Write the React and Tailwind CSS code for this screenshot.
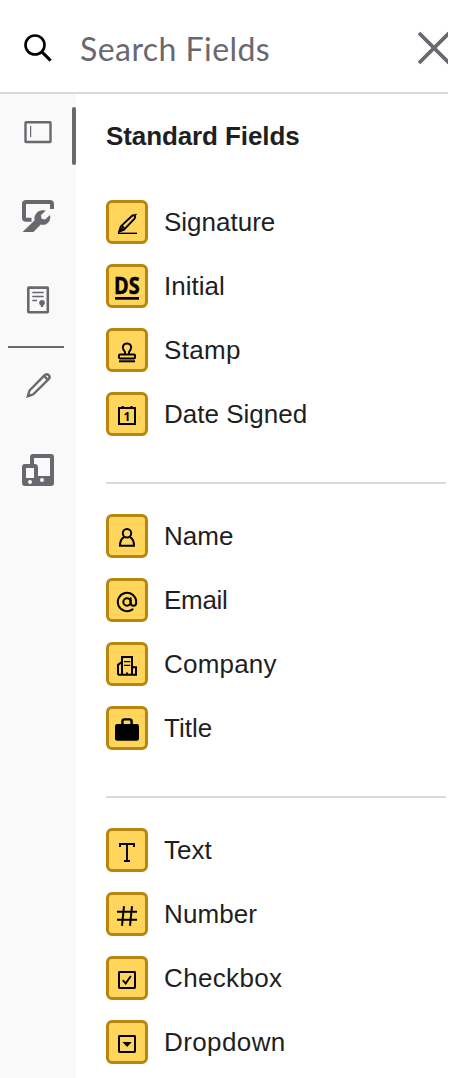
import { AtSign } from "lucide-react";

const SignatureIcon = () => (
  <g strokeWidth="1.9">
    <path d="M13.2 31.6l1.6-5.2L25.6 16.2c1.1-1 2.4-1 3.1-.3.7.8.5 2-.4 3L18 29.6z" />
    <path d="M15.6 25.6l2.8 3M28.2 15.8l2.3-1.8M13 31.6l5-5.2" strokeWidth="1.5" />
    <path d="M12 33.3h19" strokeWidth="1.4" />
  </g>
);

const InitialIcon = () => (
  <g fill="#000" stroke="none">
    <text x="8" y="30" fontFamily="'Open Sans', sans-serif" fontWeight="700" fontSize="23" textLength="25.6" lengthAdjust="spacingAndGlyphs" stroke="#000" strokeWidth=".5">DS</text>
    <path d="M9 33h24v2.7H9z" />
  </g>
);

const StampIcon = () => (
  <g>
    <path d="M19 26v-2l-1.6-2.6c-1.7-3 .4-5.8 3.6-5.8s5.3 2.8 3.6 5.8L23 24v2" />
    <rect x="13" y="26.6" width="16" height="3.8" rx=".8" />
    <path d="M13 33.3h16" />
  </g>
);

const DateIcon = () => (
  <g>
    <path d="M13 16h16v16H13zM16.7 14v2M25.5 14v2" />
    <text x="17.4" y="28.6" fill="#000" stroke="none" fontFamily="'Open Sans', sans-serif" fontWeight="700" fontSize="12">1</text>
  </g>
);

const NameIcon = () => (
  <g>
    <circle cx="21" cy="19.3" r="4.2" />
    <path d="M17.9 23.2c-2.3 1.4-3.9 4.2-3.9 8.6h14c0-4.4-1.6-7.2-3.9-8.6" />
  </g>
);

const EmailIcon = () => (
  <AtSign x="10" y="13" width="22" height="22" strokeWidth={2.2} />
);

const CompanyIcon = () => (
  <g strokeWidth="2">
    <path d="M16 33V15h10v18M12 32.8V22.8l3.8-2.6M26 25.2h4v7.6H12" />
    <path d="M18 19.6h6.3M18 23.3h6.3" strokeWidth="1.2" />
    <path d="M21 33v-2.6" />
  </g>
);

const TitleIcon = () => (
  <g>
    <rect x="9" y="18" width="24" height="16.7" rx="2.2" fill="#000" stroke="none" />
    <path d="M16.4 19v-3.6c0-1.3.8-2 2-2h5.2c1.2 0 2 .7 2 2V19" strokeWidth="2.4" />
  </g>
);

const TextIcon = () => (
  <path d="M14 19v-3h14v3M21 16v17M18 33h6" strokeWidth="1.9" />
);

const NumberIcon = () => (
  <path d="M11 19.7h20M11 27.7h20M18 14.2l-2 19.6M26 14.2l-2 19.6" strokeWidth="2" />
);

const CheckboxIcon = () => (
  <g>
    <rect x="13" y="16" width="16" height="16" rx=".4" />
    <path d="M16.7 24.2l3 3.2 5.2-7.4" strokeWidth="1.9" />
  </g>
);

const DropdownIcon = () => (
  <g>
    <rect x="13" y="16" width="16" height="16" rx=".4" />
    <path d="M16.5 22h9.2l-4.6 5z" fill="#000" stroke="none" />
  </g>
);

const groups = [
  [
    { label: "Signature", icon: SignatureIcon },
    { label: "Initial", icon: InitialIcon },
    { label: "Stamp", icon: StampIcon, tracking: "tracking-[0.3px]" },
    { label: "Date Signed", icon: DateIcon },
  ],
  [
    { label: "Name", icon: NameIcon },
    { label: "Email", icon: EmailIcon, tracking: "tracking-[-0.3px]" },
    { label: "Company", icon: CompanyIcon, tracking: "tracking-[0.2px]" },
    { label: "Title", icon: TitleIcon },
  ],
  [
    { label: "Text", icon: TextIcon },
    { label: "Number", icon: NumberIcon, tracking: "tracking-[0.1px]" },
    { label: "Checkbox", icon: CheckboxIcon, tracking: "tracking-[0.35px]" },
    { label: "Dropdown", icon: DropdownIcon, tracking: "tracking-[0.4px]" },
  ],
];

const RailButton = ({ label, children }) => (
  <button aria-label={label} className="h-10 w-10 shrink-0">
    <svg viewBox="0 0 40 40" className="block h-10 w-10" fill="none" stroke="#69686f" strokeWidth="2.4">
      {children}
    </svg>
  </button>
);

const Rail = () => (
  <nav className="relative flex w-[76px] shrink-0 flex-col items-center bg-[#f9f9f9] pt-[18px]">
    <span className="absolute right-0 top-[13px] h-[58px] w-1 rounded-sm bg-[#69686f]" />

    <div className="flex flex-col gap-11">
      <RailButton label="Standard fields">
        <rect x="7.5" y="10.2" width="25" height="19.8" rx=".6" />
        <path d="M12.6 14v11" strokeWidth="1.2" />
      </RailButton>

      <RailButton label="Custom fields">
        <path d="M13.5 23.7H8c-1.4 0-2-.7-2-2V8c0-1.3.7-2 2-2h24c1.3 0 2 .7 2 2v5" strokeWidth="4" />
        <path
          d="M4.6 36h10.8l7.4-7.4c3.2.7 6.1-.3 7.7-2.4 1.8-2.3 2.2-5 1.5-7.2l-4.9 4.6-3.5-.8-.7-3.5 4.7-4.6c-3.3-1.1-6.8-.2-9 2.2-2 2.3-2.6 5-2 7.4z"
          fill="#69686f"
          stroke="none"
        />
      </RailButton>

      <RailButton label="Pre-fill fields">
        <rect x="10.3" y="7.6" width="19.5" height="24.6" rx=".5" strokeWidth="2.6" />
        <path d="M14.3 12.5h11.4M14.3 16.5h11.4M14.3 20.5H19" strokeWidth="1.5" />
        <circle cx="24" cy="22.7" r="2.8" fill="#69686f" stroke="none" />
        <path d="M24 23v4" strokeWidth="2.2" />
      </RailButton>
    </div>

    <hr className="mb-[17px] ml-2 mt-[26px] w-14 self-start border-t-2 border-[#69686f]" />

    <div className="flex flex-col gap-[45px]">
      <RailButton label="Edit">
        <path d="M9.9 31.2l1.6-5.7L26.4 10.4c1.3-1.3 3.1-1.4 4.3-.3 1.2 1.2 1 3-.3 4.3L15.3 29.3zM26.1 11l3.4 3.4" />
        <path d="M8.7 32.5l1.5-4.9 3.6 3.4z" fill="#69686f" stroke="none" />
      </RailButton>

      <RailButton label="Devices">
        <path
          d="M15 4h18a3 3 0 0 1 3 3v26a3 3 0 0 1-3 3H7a3 3 0 0 1-3-3V17a3 3 0 0 1 3-3h5V7a3 3 0 0 1 3-3z"
          fill="#69686f"
          stroke="none"
        />
        <path d="M16 8h16v18H20v-9c0-1.8-1.2-3-3-3h-1zM8 18h8v10H8z" fill="#f9f9f9" stroke="none" />
        <circle cx="12" cy="32" r="2" fill="#f9f9f9" stroke="none" />
        <circle cx="24" cy="30" r="2" fill="#f9f9f9" stroke="none" />
      </RailButton>
    </div>
  </nav>
);

const Field = ({ label, icon: Icon, tracking = "" }) => (
  <li className="flex items-center gap-4">
    <span className="h-11 w-[42px] shrink-0 rounded-[6px] border-[3px] border-[#b8860f] bg-[#ffd65b]">
      <svg viewBox="3 3 36 38" className="block h-[38px] w-9" fill="none" stroke="#000" strokeWidth="2">
        <Icon />
      </svg>
    </span>
    <span className={`text-[26px] leading-[44px] text-[#1f1f1f] ${tracking}`}>{label}</span>
  </li>
);

const App = () => {
  return (
    <div className="h-[1078px] w-full overflow-hidden bg-white font-['Liberation_Sans',Arial,sans-serif]">
      <div className="flex h-full w-[448px] flex-col">

        {/* Search */}
        <header className="flex h-[94px] shrink-0 items-center overflow-hidden border-b-2 border-[#d9d9d9] pl-[22px]">
          <svg viewBox="0 0 32 32" className="mt-1 h-8 w-8 shrink-0" fill="none" stroke="#000" strokeWidth="2.6">
            <circle cx="13" cy="13" r="9.5" />
            <path d="M19.6 19.6l9 9" strokeWidth="3" />
          </svg>
          <span className="ml-[26px] mt-1.5 flex-1 whitespace-nowrap font-['Lato',sans-serif] text-[32px] leading-10 tracking-[0.45px] text-[#69686f]">
            Search Fields
          </span>
          <button aria-label="Close" className="-mr-1 mt-[3px] shrink-0">
            <svg viewBox="0 0 36 36" className="block h-9 w-9" fill="none" stroke="#69686f" strokeWidth="3.8">
              <path d="M3 3l30 30M33 3l-30 30" />
            </svg>
          </button>
        </header>

        <div className="flex min-h-0 flex-1">
          <Rail />

          {/* Field list */}
          <main className="flex-1 pl-[30px] pr-0.5 pt-[22px]">
            <h2 className="mb-11 text-[26px] font-bold leading-10 tracking-[-0.1px] text-[#1f1f1f]">Standard Fields</h2>

            {groups.map((fields, i) => (
              <section key={i} className={i > 0 ? "mt-[46px] border-t-2 border-[#d9d9d9] pt-[30px]" : ""}>
                <ul className="flex flex-col gap-5">
                  {fields.map((field) => (
                    <Field key={field.label} {...field} />
                  ))}
                </ul>
              </section>
            ))}
          </main>
        </div>

      </div>
    </div>
  );
};

export default App;
